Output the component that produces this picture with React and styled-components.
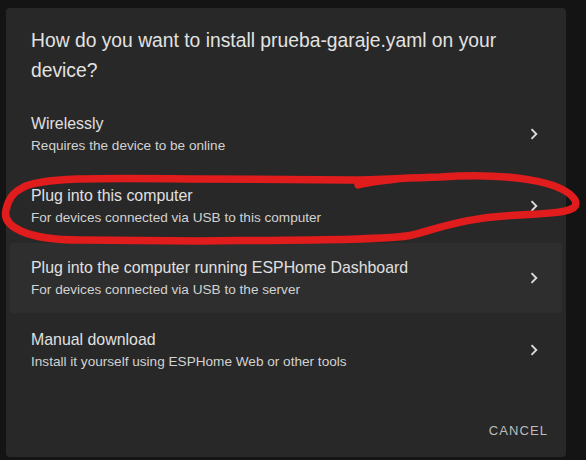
import React from "react";
import styled, { createGlobalStyle } from "styled-components";

const Global = createGlobalStyle`
  html, body { margin: 0; padding: 0; background: #141414; }
  body { width: 586px; height: 460px; overflow: hidden; font-family: "Liberation Sans", Arial, sans-serif; }
  * { box-sizing: border-box; }
`;

const Page = styled.div`
  position: relative;
  width: 586px;
  height: 460px;
  padding: 8px 20px 3px 6px;
  display: flex;
`;

const Dialog = styled.div`
  flex: 1;
  background: #282828;
  border-radius: 4px;
  display: flex;
  flex-direction: column;
`;

const Title = styled.h2`
  margin: 0;
  padding: 18px 40px 0 25px;
  font-size: 19.3px;
  line-height: 30px;
  font-weight: normal;
  color: #e2e2e2;
`;

const List = styled.div`
  margin-top: 12px;
  display: flex;
  flex-direction: column;
`;

const Row = styled.div`
  height: 70px;
  margin: 1px 4px;
  padding: 0 24px 0 21px;
  display: flex;
  align-items: center;
  border-radius: 2px;
  background: ${(p) => (p.$hover ? "#2e2e2e" : "transparent")};
`;

const Texts = styled.div`
  flex: 1;
  display: flex;
  flex-direction: column;
`;

const RowTitle = styled.div`
  font-size: 15.9px;
  line-height: 22px;
  color: #e0e0e0;
`;

const RowSub = styled.div`
  margin-top: 2px;
  font-size: 13.6px;
  line-height: 18px;
  color: #d2d2d2;
`;

const Chevron = styled.svg`
  width: 8px;
  height: 12px;
  flex: none;
`;

const Footer = styled.div`
  margin-top: auto;
  display: flex;
  justify-content: flex-end;
  padding: 0 18px 16px 0;
`;

const CancelButton = styled.button`
  background: none;
  border: none;
  padding: 0;
  font-family: inherit;
  font-size: 13px;
  letter-spacing: 1.1px;
  line-height: 20px;
  color: #bdbdbd;
  text-transform: uppercase;
`;

const Annotation = styled.svg`
  position: absolute;
  left: 0;
  top: 0;
  width: 586px;
  height: 460px;
  pointer-events: none;
`;

const options = [
  { title: "Wirelessly", sub: "Requires the device to be online" },
  { title: "Plug into this computer", sub: "For devices connected via USB to this computer" },
  { title: "Plug into the computer running ESPHome Dashboard", sub: "For devices connected via USB to the server", hover: true },
  { title: "Manual download", sub: "Install it yourself using ESPHome Web or other tools" },
];

export default function App() {
  return (
    <>
      <Global />
      <Page>
        <Dialog>
          <Title>How do you want to install prueba-garaje.yaml on your device?</Title>
          <List>
            {options.map((o) => (
              <Row key={o.title} $hover={o.hover}>
                <Texts>
                  <RowTitle>{o.title}</RowTitle>
                  <RowSub>{o.sub}</RowSub>
                </Texts>
                <Chevron viewBox="0 0 8 12">
                  <path d="M1.5 1.2 L6.3 6 L1.5 10.8" fill="none" stroke="#dcdcdc" strokeWidth="1.9" />
                </Chevron>
              </Row>
            ))}
          </List>
          <Footer>
            <CancelButton>Cancel</CancelButton>
          </Footer>
        </Dialog>
        <Annotation viewBox="0 0 586 460">
          <g fill="none" stroke="#e01c1c" strokeWidth="7.5" strokeLinecap="round" strokeLinejoin="round" transform="translate(0 3)">
            <path d="M22 185 C40 174 100 175 200 176 L350 177 C380 177 400 175 440 174 C500 170 562 176 575 197 C580 208 563 210 520 212 C470 214 445 223 412 232 C390 237 300 237 200 238 L80 237 C25 237 2 223 6 207 C8 196 14 189 22 185 Z" />
            <path d="M358 182 C368 179 382 178 396 176" />
          </g>
        </Annotation>
      </Page>
    </>
  );
}
